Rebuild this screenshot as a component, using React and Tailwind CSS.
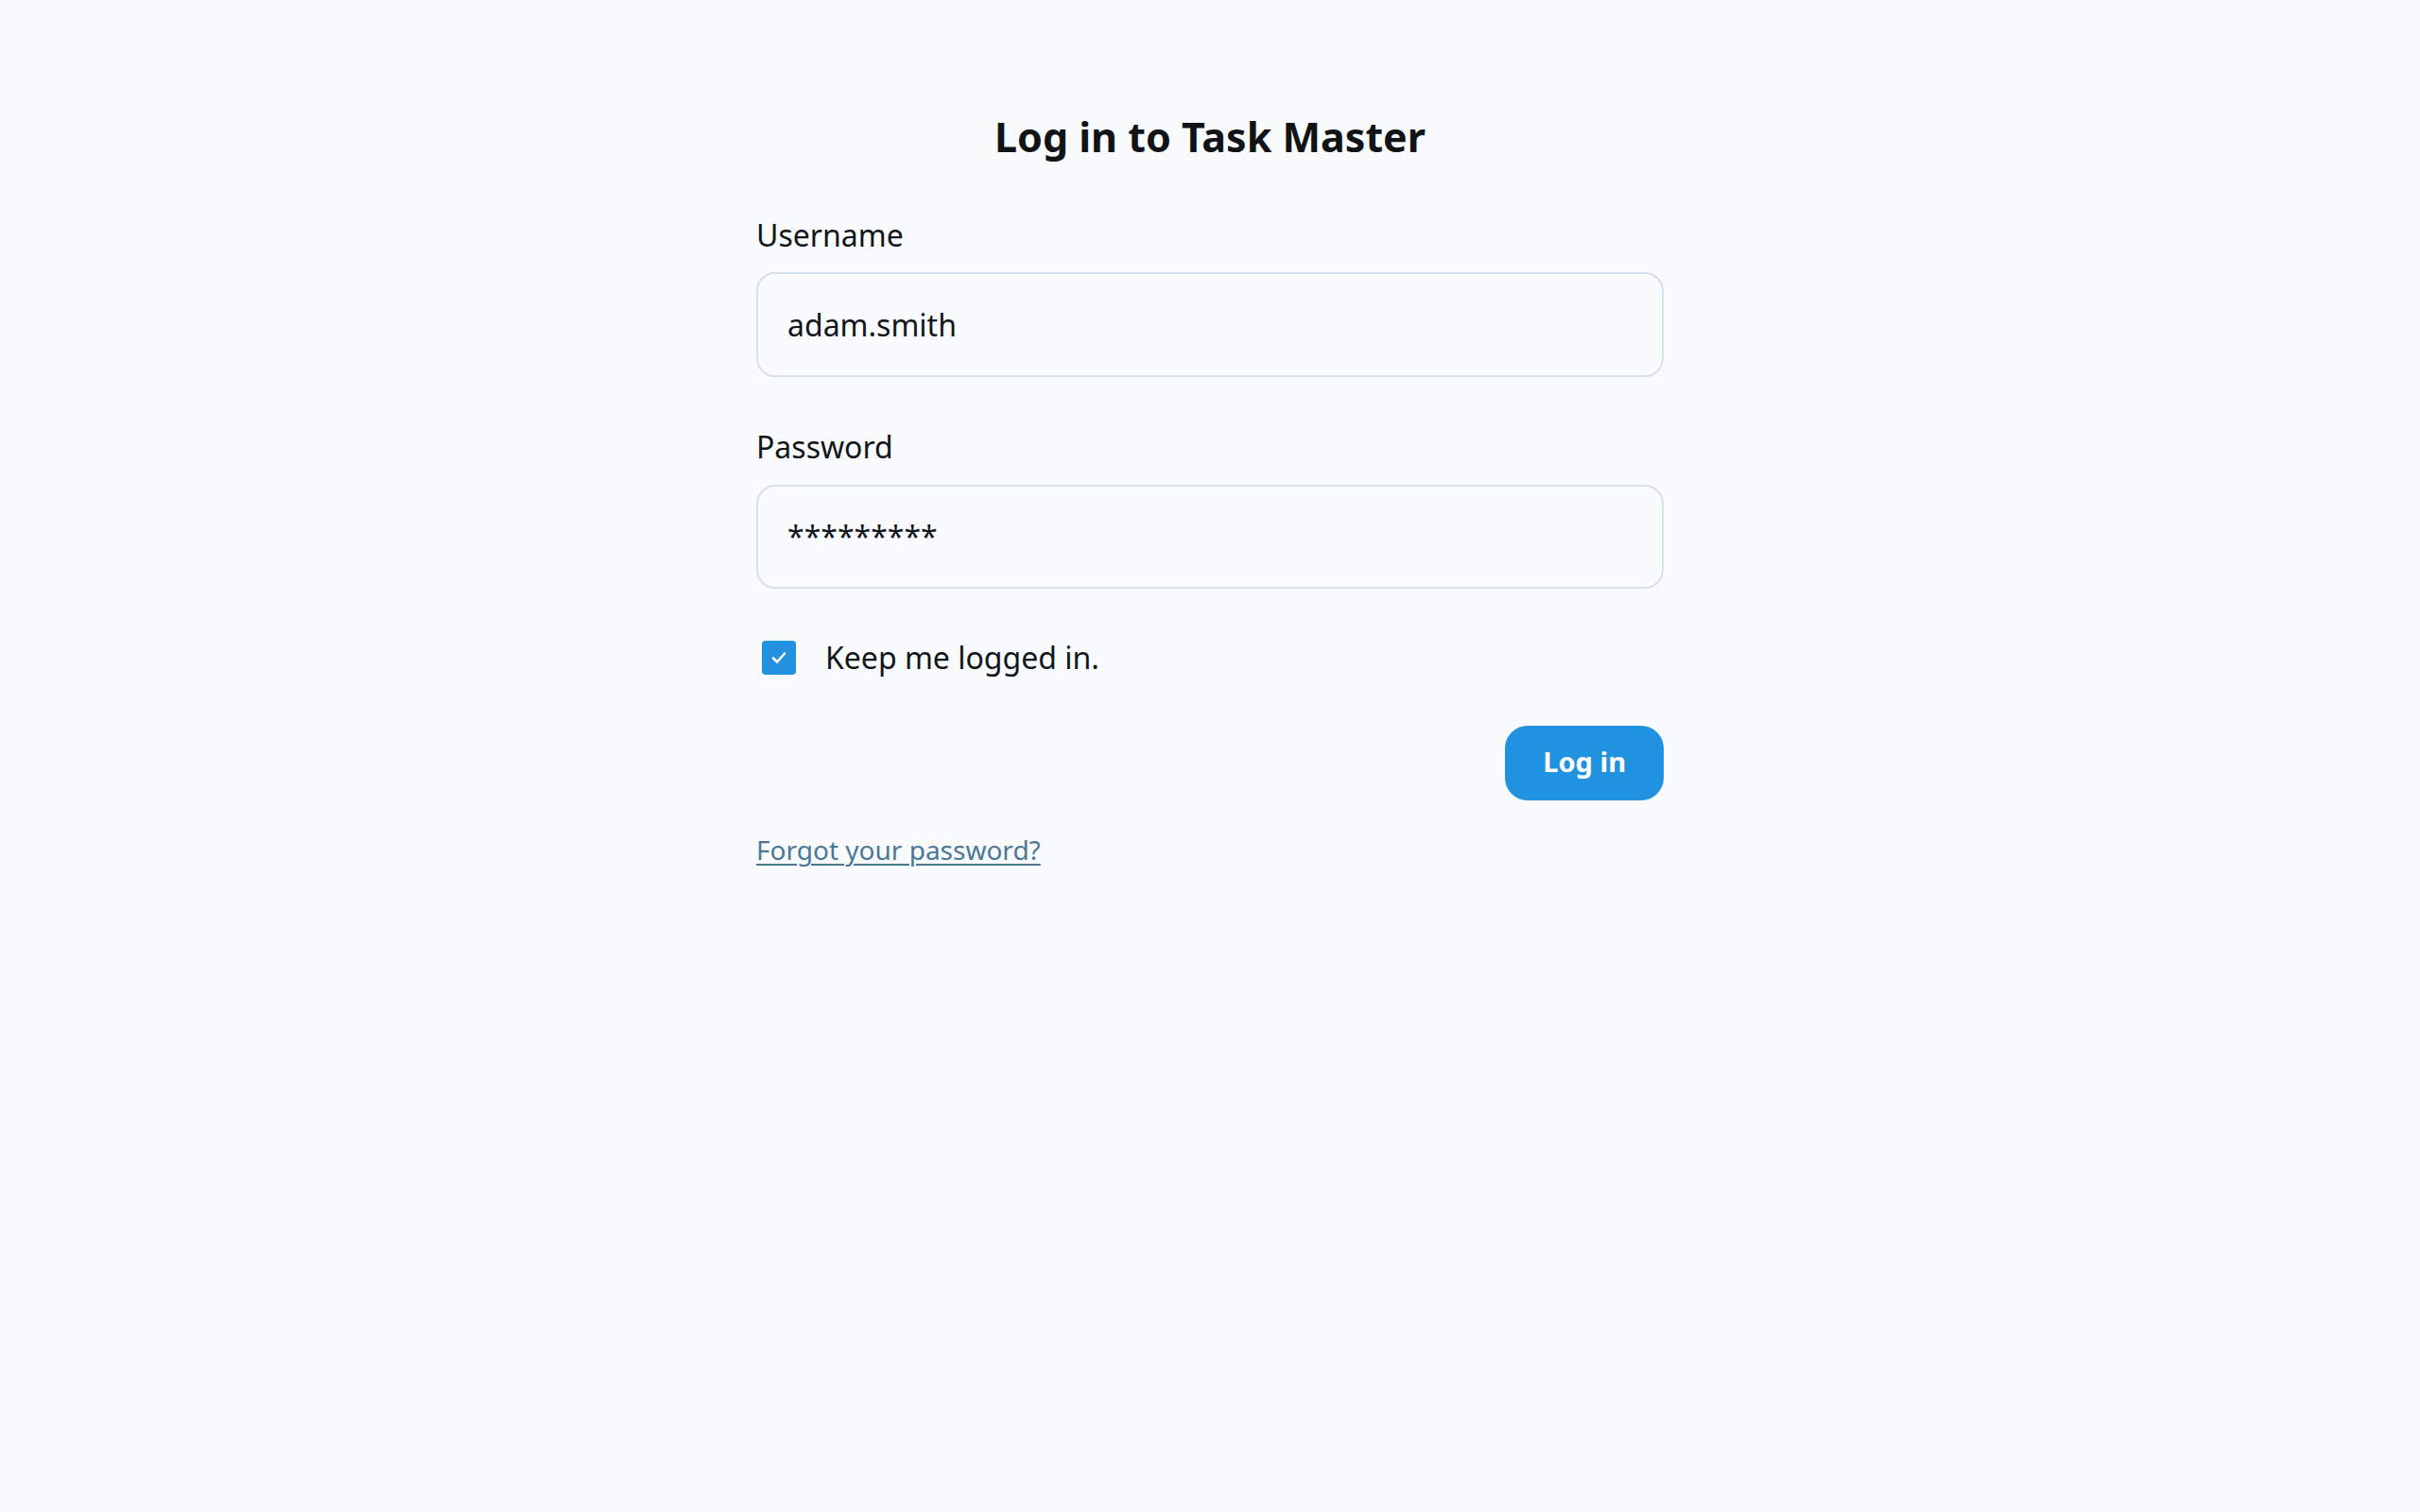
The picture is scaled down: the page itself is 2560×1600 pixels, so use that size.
export default function App() {
  return (
    <div className="min-h-screen w-full bg-[#f8fafc] text-[#12161a]" style={{ fontFamily: '"Noto Sans", "Open Sans", sans-serif' }}>
      <div className="mx-auto w-[960px] pt-[115px]">
        <h1 className="text-center text-[43px] font-bold leading-[60px] text-[#111417]">Log in to Task Master</h1>

        <label className="mt-[52px] block text-[32px] leading-[44px]">Username</label>
        <div className="mt-[17px] flex h-[111px] items-center rounded-[20px] border-2 border-[#d7e1e9] bg-[#f8fafc] pl-[31px] text-[32px] leading-[44px]">
          adam.smith
        </div>

        <label className="mt-[52px] block text-[32px] leading-[44px]">Password</label>
        <div className="mt-[18px] flex h-[110px] items-center rounded-[20px] border-2 border-[#d7e1e9] bg-[#f8fafc] pl-[31px] text-[32px] leading-[44px]">
          *********
        </div>

        <div className="mt-[55px] flex h-[36px] items-center">
          <div className="ml-[6px] flex h-[36px] w-[36px] items-center justify-center rounded-[4px] bg-[#2292e0]">
            <svg width="20" height="20" viewBox="0 0 20 20" fill="none">
              <path d="M4 10.5 L8 14.5 L16 5.5" stroke="white" strokeWidth="2.6" strokeLinecap="round" strokeLinejoin="round" />
            </svg>
          </div>
          <span className="ml-[31px] text-[32px] leading-[44px]">Keep me logged in.</span>
        </div>

        <div className="mt-[54px] flex justify-end">
          <button className="flex h-[79px] items-center rounded-[24px] bg-[#2192df] px-[40px] pb-[3px] text-[29px] font-bold text-white">
            Log in
          </button>
        </div>

        <div className="mt-[33px]">
          <a href="#" className="text-[28px] leading-[38px] text-[#4b7896] underline decoration-[2px] underline-offset-[4px]">
            Forgot your password?
          </a>
        </div>
      </div>
    </div>
  );
}
